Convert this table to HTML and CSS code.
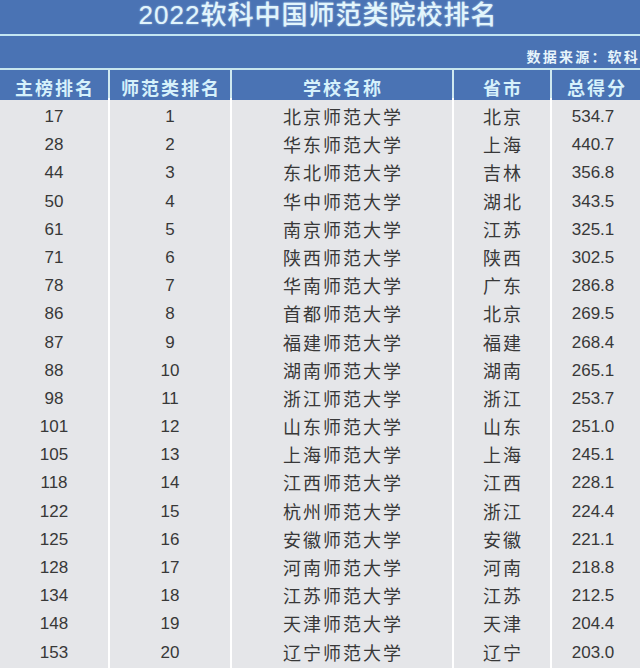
FILE: index.html
```html
<!DOCTYPE html>
<html lang="zh-CN">
<head>
<meta charset="utf-8">
<title>2022软科中国师范类院校排名</title>
<link rel="stylesheet" href="styles.css">
</head>
<body>
<div class="sheet">
  <div class="title">2022软科中国师范类院校排名</div>
  <div class="source"><span>数据来源：软科</span></div>
  <div class="row head">
    <div class="cell">主榜排名</div>
    <div class="cell">师范类排名</div>
    <div class="cell">学校名称</div>
    <div class="cell">省市</div>
    <div class="cell">总得分</div>
  </div>
  <div class="rows">
    <div class="row"><div class="cell num">17</div><div class="cell num">1</div><div class="cell cjk">北京师范大学</div><div class="cell cjk">北京</div><div class="cell num score">534.7</div></div>
    <div class="row"><div class="cell num">28</div><div class="cell num">2</div><div class="cell cjk">华东师范大学</div><div class="cell cjk">上海</div><div class="cell num score">440.7</div></div>
    <div class="row"><div class="cell num">44</div><div class="cell num">3</div><div class="cell cjk">东北师范大学</div><div class="cell cjk">吉林</div><div class="cell num score">356.8</div></div>
    <div class="row"><div class="cell num">50</div><div class="cell num">4</div><div class="cell cjk">华中师范大学</div><div class="cell cjk">湖北</div><div class="cell num score">343.5</div></div>
    <div class="row"><div class="cell num">61</div><div class="cell num">5</div><div class="cell cjk">南京师范大学</div><div class="cell cjk">江苏</div><div class="cell num score">325.1</div></div>
    <div class="row"><div class="cell num">71</div><div class="cell num">6</div><div class="cell cjk">陕西师范大学</div><div class="cell cjk">陕西</div><div class="cell num score">302.5</div></div>
    <div class="row"><div class="cell num">78</div><div class="cell num">7</div><div class="cell cjk">华南师范大学</div><div class="cell cjk">广东</div><div class="cell num score">286.8</div></div>
    <div class="row"><div class="cell num">86</div><div class="cell num">8</div><div class="cell cjk">首都师范大学</div><div class="cell cjk">北京</div><div class="cell num score">269.5</div></div>
    <div class="row"><div class="cell num">87</div><div class="cell num">9</div><div class="cell cjk">福建师范大学</div><div class="cell cjk">福建</div><div class="cell num score">268.4</div></div>
    <div class="row"><div class="cell num">88</div><div class="cell num">10</div><div class="cell cjk">湖南师范大学</div><div class="cell cjk">湖南</div><div class="cell num score">265.1</div></div>
    <div class="row"><div class="cell num">98</div><div class="cell num">11</div><div class="cell cjk">浙江师范大学</div><div class="cell cjk">浙江</div><div class="cell num score">253.7</div></div>
    <div class="row"><div class="cell num">101</div><div class="cell num">12</div><div class="cell cjk">山东师范大学</div><div class="cell cjk">山东</div><div class="cell num score">251.0</div></div>
    <div class="row"><div class="cell num">105</div><div class="cell num">13</div><div class="cell cjk">上海师范大学</div><div class="cell cjk">上海</div><div class="cell num score">245.1</div></div>
    <div class="row"><div class="cell num">118</div><div class="cell num">14</div><div class="cell cjk">江西师范大学</div><div class="cell cjk">江西</div><div class="cell num score">228.1</div></div>
    <div class="row"><div class="cell num">122</div><div class="cell num">15</div><div class="cell cjk">杭州师范大学</div><div class="cell cjk">浙江</div><div class="cell num score">224.4</div></div>
    <div class="row"><div class="cell num">125</div><div class="cell num">16</div><div class="cell cjk">安徽师范大学</div><div class="cell cjk">安徽</div><div class="cell num score">221.1</div></div>
    <div class="row"><div class="cell num">128</div><div class="cell num">17</div><div class="cell cjk">河南师范大学</div><div class="cell cjk">河南</div><div class="cell num score">218.8</div></div>
    <div class="row"><div class="cell num">134</div><div class="cell num">18</div><div class="cell cjk">江苏师范大学</div><div class="cell cjk">江苏</div><div class="cell num score">212.5</div></div>
    <div class="row"><div class="cell num">148</div><div class="cell num">19</div><div class="cell cjk">天津师范大学</div><div class="cell cjk">天津</div><div class="cell num score">204.4</div></div>
    <div class="row"><div class="cell num">153</div><div class="cell num">20</div><div class="cell cjk">辽宁师范大学</div><div class="cell cjk">辽宁</div><div class="cell num score">203.0</div></div>
    <div class="row"><div class="cell"></div><div class="cell"></div><div class="cell"></div><div class="cell"></div><div class="cell"></div></div>
  </div>
</div>
</body>
</html>
```

FILE: styles.css
```css
html, body {
  margin: 0;
  padding: 0;
  background: #ffffff;
}

body {
  width: 640px;
  height: 668px;
  overflow: hidden;
  font-family: "Liberation Sans", "Noto Sans CJK SC", sans-serif;
}

.sheet {
  display: flex;
  flex-direction: column;
}

.title {
  height: 34px;
  line-height: 30px;
  background: #4a73b4;
  color: #e2f5fc;
  font-size: 26px;
  font-weight: 500;
  letter-spacing: 1px;
  text-align: center;
  padding-right: 4px;
  border-bottom: 2px solid #c4e6f2;
  text-shadow: 0 0 2px rgba(220, 245, 255, 0.6);
}

.source {
  height: 32px;
  background: #4a73b4;
  display: flex;
  align-items: center;
  justify-content: flex-end;
  border-bottom: 2px solid #c8e6ee;
}

.source span {
  color: #e6f4fb;
  font-size: 14px;
  font-weight: bold;
  letter-spacing: 2.2px;
  margin-right: 0;
  padding-top: 7px;
}

.row {
  display: grid;
  grid-template-columns: 108px 120px 220px 96px 1fr;
  column-gap: 2px;
  background: #ffffff;
}

.head {
  height: 28px;
  background: #cfe9f0;
  border-bottom: 2px solid #ffffff;
}

.head .cell {
  background: #4a73b4;
  color: #d6f1fb;
  font-size: 18px;
  font-weight: bold;
  letter-spacing: 2px;
  text-indent: 2px;
  padding-top: 4px;
}

.rows {
  display: flex;
  flex-direction: column;
  row-gap: 2px;
}

.rows .row {
  height: 26.2px;
}

.cell {
  display: flex;
  align-items: center;
  justify-content: center;
  background: #e5e6e9;
  color: #383838;
  font-size: 17px;
  white-space: nowrap;
  padding-top: 5px;
}

.cjk {
  font-size: 18px;
  letter-spacing: 2px;
  text-indent: 2px;
  padding-top: 3px;
}

.score {
  padding-right: 6px;
}
```
